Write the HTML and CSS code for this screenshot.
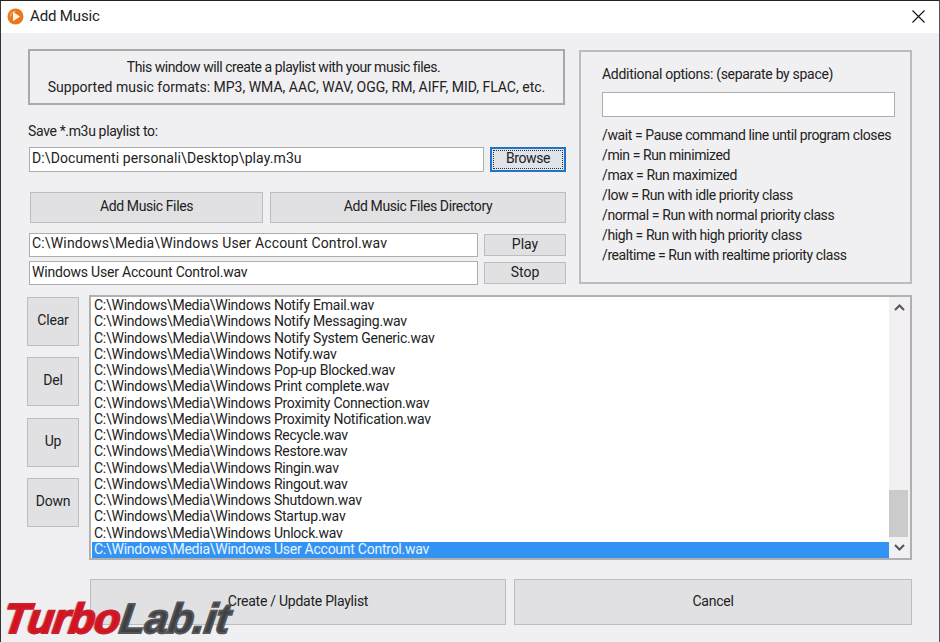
FILE: index.html
```html
<!DOCTYPE html>
<html lang="en">
<head>
<meta charset="utf-8">
<title>Add Music</title>
<link rel="stylesheet" href="styles.css">
</head>
<body>
<div class="window">
  <header class="titlebar">
    <svg class="app-icon" width="17" height="17" viewBox="0 0 17 17"><circle cx="8.5" cy="8.5" r="8" fill="#e9781c"/><path d="M3.4 8.5a5.1 5.1 0 0 1 5.1-5.1" stroke="#f6b26e" stroke-width="1.2" fill="none"/><path d="M6 3.8 13 8.5 6 13.2Z" fill="#fbf4ec"/></svg>
    <span class="title">Add Music</span>
    <svg class="close" width="13" height="13" viewBox="0 0 13 13"><path d="M.5.5 12.5 12.5M12.5.5.5 12.5" stroke="#111" stroke-width="1.1" fill="none"/></svg>
  </header>
  <main class="content">
    <section class="top">
      <div class="left">
        <div class="info">
          <div class="info-first">This window will create a playlist with your music files.</div>
          <div>Supported music formats: MP3, WMA, AAC, WAV, OGG, RM, AIFF, MID, FLAC, etc.</div>
        </div>
        <div class="save-label">Save *.m3u playlist to:</div>
        <div class="save-row">
          <div class="field save-field">D:\Documenti personali\Desktop\play.m3u</div>
          <div class="btn browse"><span class="browse-inner">Browse</span></div>
        </div>
        <div class="add-row">
          <div class="btn add-files">Add Music Files</div>
          <div class="btn add-dir">Add Music Files Directory</div>
        </div>
        <div class="play-row">
          <div class="field play-field path-field">C:\Windows\Media\Windows User Account Control.wav</div>
          <div class="btn play-btn">Play</div>
        </div>
        <div class="play-row second">
          <div class="field play-field name-field">Windows User Account Control.wav</div>
          <div class="btn play-btn">Stop</div>
        </div>
      </div>
      <aside class="options">
        <div class="opt-label">Additional options: (separate by space)</div>
        <div class="field opt-field"></div>
        <ul class="opt-list">
          <li>/wait = Pause command line until program closes</li>
          <li>/min = Run minimized</li>
          <li>/max = Run maximized</li>
          <li>/low = Run with idle priority class</li>
          <li>/normal = Run with normal priority class</li>
          <li>/high = Run with high priority class</li>
          <li>/realtime = Run with realtime priority class</li>
        </ul>
      </aside>
    </section>
    <section class="middle">
      <div class="side-btns">
        <div class="btn side">Clear</div>
        <div class="btn side">Del</div>
        <div class="btn side">Up</div>
        <div class="btn side">Down</div>
      </div>
      <div class="listbox">
        <ul class="rows">
          <li>C:\Windows\Media\Windows Notify Email.wav</li>
          <li>C:\Windows\Media\Windows Notify Messaging.wav</li>
          <li>C:\Windows\Media\Windows Notify System Generic.wav</li>
          <li>C:\Windows\Media\Windows Notify.wav</li>
          <li>C:\Windows\Media\Windows Pop-up Blocked.wav</li>
          <li>C:\Windows\Media\Windows Print complete.wav</li>
          <li>C:\Windows\Media\Windows Proximity Connection.wav</li>
          <li>C:\Windows\Media\Windows Proximity Notification.wav</li>
          <li>C:\Windows\Media\Windows Recycle.wav</li>
          <li>C:\Windows\Media\Windows Restore.wav</li>
          <li>C:\Windows\Media\Windows Ringin.wav</li>
          <li>C:\Windows\Media\Windows Ringout.wav</li>
          <li>C:\Windows\Media\Windows Shutdown.wav</li>
          <li>C:\Windows\Media\Windows Startup.wav</li>
          <li>C:\Windows\Media\Windows Unlock.wav</li>
          <li class="selected">C:\Windows\Media\Windows User Account Control.wav</li>
        </ul>
        <div class="scrollbar">
          <svg class="arrow" width="11" height="7" viewBox="0 0 11 7"><path d="M1 6 5.5 1.5 10 6" stroke="#555" stroke-width="2" fill="none"/></svg>
          <div class="track"><div class="thumb"></div></div>
          <svg class="arrow" width="11" height="7" viewBox="0 0 11 7"><path d="M1 1 5.5 5.5 10 1" stroke="#555" stroke-width="2" fill="none"/></svg>
        </div>
      </div>
    </section>
    <section class="bottom">
      <div class="btn create">Create / Update Playlist</div>
      <div class="btn cancel">Cancel</div>
    </section>
  </main>
  <div class="watermark"><span class="wm-red">Turbo</span><span class="wm-grey">Lab.it</span></div>
</div>
</body>
</html>
```
FILE: styles.css
```css
* { box-sizing: border-box; }
html, body { margin: 0; padding: 0; }
body {
  width: 940px;
  height: 642px;
  overflow: hidden;
  font-family: Roboto, "Open Sans", sans-serif;
  font-size: 14px;
  color: #222;
  background: #f0f0f0;
}
.window {
  position: relative;
  width: 940px;
  height: 642px;
  border-top: 1px solid #222;
  border-left: 1px solid #333;
  border-right: 1px solid #555;
  background: #f0eff1;
}
.titlebar {
  display: flex;
  align-items: center;
  height: 32px;
  padding: 0 14px 2px 6px;
  background: #fff;
}
.app-icon { margin-right: 6px; }
.title { font-size: 15px; color: #222; flex: 1; letter-spacing: -0.15px; }
.content { padding: 16px 26px 0 26px; }
.top { display: flex; gap: 13px; }
.left { width: 539px; }
.info {
  margin: 0 1px 0 1px;
  height: 56px;
  border: 2px solid #a9a9a9;
  text-align: center;
  padding-top: 6px;
  line-height: 20px;
}
.info-first { letter-spacing: -0.44px; padding-right: 26px; }
.save-label { margin: 16px 0 0 1px; line-height: 20px; height: 21px; letter-spacing: -0.35px; }
.field {
  background: #fff;
  border: 1.5px solid #aeaeae;
  padding-left: 2px;
  white-space: nowrap;
  overflow: hidden;
}
.btn {
  display: flex;
  align-items: center;
  justify-content: center;
  background: #e1e1e3;
  border: 1.5px solid #bdbdbd;
  white-space: nowrap;
  padding-bottom: 3px;
}
.save-row { display: flex; margin: 5px 0 0 2px; gap: 6px; height: 25px; }
.save-field { width: 455px; line-height: 20px; letter-spacing: 0.1px; }
.browse {
  width: 76px;
  border: 2px solid #2273c4;
  background: #dfe3ea;
  padding: 1px;
  letter-spacing: -0.4px;
}
.browse-inner {
  display: block;
  width: 100%;
  height: 100%;
  text-align: center;
  line-height: 15px;
  border: 1px dotted #333;
}
.add-row { display: flex; margin: 20px 0 0 3px; gap: 7px; height: 31px; letter-spacing: -0.4px; }
.add-files { width: 233px; }
.add-dir { width: 296px; }
.play-row { display: flex; margin: 10px 0 0 2px; gap: 6px; height: 24px; align-items: center; }
.play-row.second { margin-top: 4px; }
.play-field { width: 449px; height: 24px; line-height: 19px; }
.path-field { letter-spacing: 0.16px; }
.name-field { letter-spacing: -0.2px; line-height: 21px; }
.play-btn { width: 82px; height: 22px; }
.options {
  width: 333px;
  height: 234px;
  margin-top: 1px;
  border: 2px solid #bcbcbc;
  padding: 12px 0 0 21px;
}
.opt-label { line-height: 20px; letter-spacing: -0.3px; }
.opt-field { width: 293px; height: 25px; margin-top: 8px; }
.opt-list {
  list-style: none;
  margin: 8px 0 0;
  padding: 0;
  line-height: 20px;
  letter-spacing: -0.4px;
}
.middle { display: flex; margin-top: 10px; height: 265px; }
.side-btns { width: 52px; margin-right: 10px; padding-top: 2px; }
.side { height: 49px; margin-bottom: 11.4px; letter-spacing: -0.2px; }
.listbox {
  display: flex;
  width: 823px;
  height: 265px;
  background: #fff;
  border: 2px solid #b0b0b0;
  padding-left: 1px;
}
.rows {
  list-style: none;
  flex: 1;
  margin: 0;
  padding: 1px 0 0;
  font-size: 14px;
  letter-spacing: -0.25px;
}
.rows li {
  height: 16.27px;
  line-height: 15px;
  padding-left: 2px;
  white-space: nowrap;
}
.rows .selected {
  background: #3393f5;
  color: #eaf3fb;
}
.scrollbar {
  display: flex;
  flex-direction: column;
  align-items: center;
  width: 21px;
  background: #f3f0f4;
}
.arrow { flex: none; margin: 7px 0; }
.track { flex: 1; width: 100%; position: relative; display: flex; flex-direction: column; justify-content: flex-end; margin-top: -2px; }
.thumb { height: 47px; width: 19px; background: #cbcbcb; }
.bottom { display: flex; margin: 19px 0 0 63px; gap: 8px; height: 46px; letter-spacing: -0.25px; }
.create { width: 416px; }
.cancel { width: 398px; }
.watermark {
  position: absolute;
  left: 0;
  top: 597px;
  font-family: "Liberation Sans", sans-serif;
  font-weight: 700;
  font-style: italic;
  font-size: 42px;
  line-height: 42px;
  letter-spacing: -0.4px;
  white-space: nowrap;
  transform: skewX(-8deg);
  transform-origin: left bottom;
}
.wm-red { color: #d5121f; -webkit-text-stroke: 2px #c9202c; text-shadow: -2px 0 0 #e8a0a4; }
.wm-grey { color: #3f4043; -webkit-text-stroke: 2px #55565a; text-shadow: -1px 0 0 #a9a9a9; }
```
